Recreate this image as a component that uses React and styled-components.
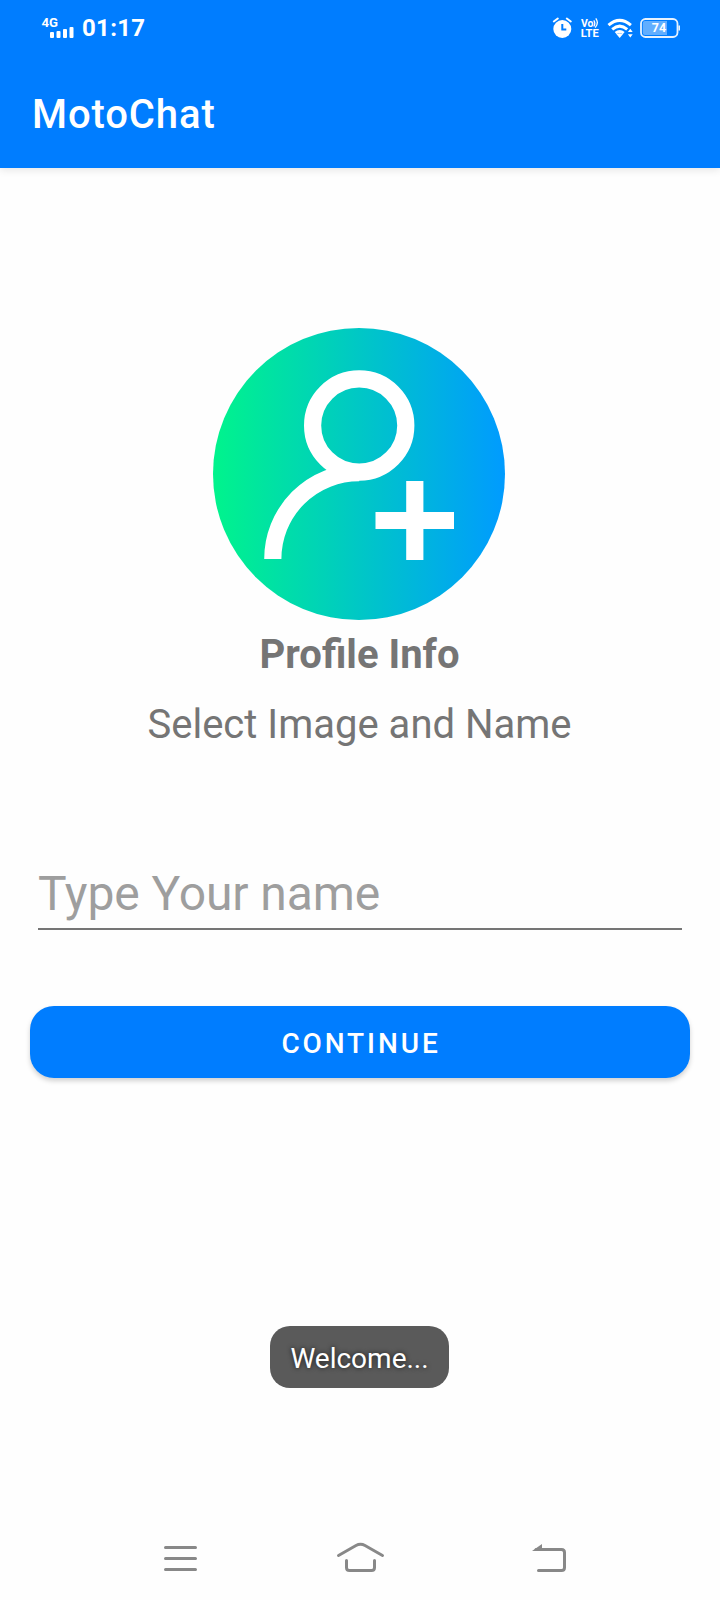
import React from "react";
import styled, { createGlobalStyle } from "styled-components";

const BLUE = "#007dff";
const GREY = "#757575";

const GlobalStyle = createGlobalStyle`
  * { box-sizing: border-box; }
  body {
    margin: 0;
    background: #fefefe;
    font-family: Roboto, "Liberation Sans", sans-serif;
  }
`;

const Screen = styled.div`
  position: relative;
  display: flex;
  flex-direction: column;
  width: 720px;
  height: 1600px;
  overflow: hidden;
  background: #fefefe;
`;

const Header = styled.header`
  height: 168px;
  background: ${BLUE};
  color: #fff;
  box-shadow: 0 2px 8px rgba(0, 0, 0, 0.1);
`;

const StatusBar = styled.div`
  display: flex;
  justify-content: space-between;
  height: 56px;
  padding: 13px 40px 0 41px;
`;

const StatusGroup = styled.div`
  display: flex;
  align-items: flex-start;
  gap: ${({ $gap }) => $gap}px;
`;

const Clock = styled.time`
  font-size: 24px;
  line-height: 30px;
  font-weight: 700;
  letter-spacing: 0.3px;
`;

const AppTitle = styled.h1`
  margin: 0;
  padding: 35px 0 0 32px;
  font-size: 40px;
  line-height: 48px;
  font-weight: 500;
  letter-spacing: 0.9px;
`;

const Main = styled.main`
  flex: 1;
  display: flex;
  flex-direction: column;
  align-items: center;
  padding: 160px 30px 0;
`;

const Avatar = styled.svg`
  display: block;
  margin-right: 2px;
`;

const Caption = styled.p`
  margin: ${({ $top }) => $top}px 1px 0 0;
  color: ${GREY};
  font-size: 40px;
  line-height: 48px;
  font-weight: ${({ $bold }) => ($bold ? 700 : 400)};
`;

const NameInput = styled.input`
  width: 644px;
  height: 76px;
  margin-top: 105px;
  padding: 5px 0 0;
  border: 0;
  border-bottom: 2px solid ${GREY};
  outline: 0;
  background: transparent;
  color: #222;
  font: 400 48px/56px Roboto, sans-serif;
  letter-spacing: -0.1px;
  &::placeholder {
    color: #9e9e9e;
    opacity: 1;
  }
`;

const ContinueButton = styled.button`
  width: 660px;
  height: 72px;
  margin-top: 76px;
  padding: 4px 0 0 2px;
  border: 0;
  border-radius: 24px;
  background: ${BLUE};
  box-shadow: 0 3px 5px rgba(0, 0, 0, 0.18);
  color: #fff;
  font: 500 28px/34px Roboto, sans-serif;
  letter-spacing: 2.9px;
`;

const Toast = styled.div`
  position: absolute;
  left: 270px;
  top: 1326px;
  width: 179px;
  height: 62px;
  padding-top: 2px;
  border-radius: 20px;
  background: #5a5a5a;
  color: #fff;
  font-size: 28px;
  line-height: 62px;
  text-align: center;
  text-shadow: 0 0 5px rgba(0, 0, 0, 0.75);
`;

const NavBar = styled.nav`
  display: flex;
  height: 84px;
  padding: 24px 0 0 160px;
`;

const NavIcon = styled.svg`
  display: block;
  margin-left: ${({ $shift = 0 }) => $shift}px;
  fill: none;
  stroke: #888;
  stroke-width: 3;
  stroke-linecap: round;
  stroke-linejoin: round;
`;

function SignalIcon() {
  return (
    <svg width="34" height="30" viewBox="41 13 34 30" fill="#fff">
      <text x="41.5" y="27" fontSize="13.3" fontWeight="700" textLength="16.5" lengthAdjust="spacingAndGlyphs">4G</text>
      <rect x="50" y="32" width="4" height="6" rx="1" />
      <rect x="56.5" y="31" width="4" height="7" rx="1" />
      <rect x="63" y="29" width="4" height="9" rx="1" />
      <rect x="69.5" y="27" width="4" height="11" rx="1" />
    </svg>
  );
}

function AlarmIcon() {
  return (
    <svg width="22" height="30" viewBox="551.7 13 22 30" fill="none">
      <circle cx="562" cy="29" r="9" fill="#fff" />
      <path d="M553.500 21.500l4-3M570.500 21.500l-4-3" stroke="#fff" strokeWidth="2" strokeLinecap="round" />
      <path d="M562 24v5.500h4" stroke={BLUE} strokeWidth="2" />
    </svg>
  );
}

function VolteIcon() {
  return (
    <svg width="20" height="30" viewBox="580 13 20 30" fill="#fff">
      <text x="581" y="26.8" fontSize="10.3" fontWeight="700" textLength="12.5" lengthAdjust="spacingAndGlyphs">Vo</text>
      <path d="M593.800 20.300q2 3.200 0 6.200M595.800 18.300q3.400 4.600-.6 9.400" fill="none" stroke="#fff" strokeWidth="1.300" />
      <text x="580.700" y="37" fontSize="10.800" fontWeight="700" textLength="18" lengthAdjust="spacingAndGlyphs">LTE</text>
    </svg>
  );
}

function WifiIcon() {
  return (
    <svg width="27" height="30" viewBox="606.5 13 27 30" fill="none">
      <g stroke="#fff" strokeWidth="3">
        <path d="M608 25.200q11.200-9.600 22.400 0" />
        <path d="M611.700 29.300q7.500-6.400 15 0" />
        <path d="M615.200 33.200q4-3.400 8 0" />
      </g>
      <path d="M616 34.300q3.200-2 6.400 0l-3.200 3.700z" fill="#fff" />
      <path d="M627.400 32l2.400-3.200 2.400 3.200zM627.400 34.200l2.400 3.200 2.400-3.200z" fill="#fff" />
    </svg>
  );
}

function BatteryIcon() {
  return (
    <svg width="40" height="30" viewBox="640 13 40 30">
      <rect x="641" y="19" width="36.500" height="18" rx="4.500" fill="none" stroke="#fff" strokeOpacity=".9" strokeWidth="1.800" />
      <path d="M645 21h22v14h-22q-2.200 0-2.200-2.200v-9.600q0-2.200 2.200-2.200z" fill="#fff" fillOpacity=".38" />
      <path d="M679.200 25.500v5" stroke="#fff" strokeWidth="1.400" />
      <text x="659" y="32.400" fontSize="12.500" fontWeight="700" textAnchor="middle" fill="#fff">74</text>
    </svg>
  );
}

function AddProfileImage() {
  return (
    <Avatar width="292" height="292" viewBox="213 328 292 292" fill="none">
      <defs>
        <linearGradient id="avatarFill" x1="0" x2="1" y1="0" y2="0">
          <stop offset="0" stopColor="#00f48c" />
          <stop offset="1" stopColor="#009bff" />
        </linearGradient>
      </defs>
      <circle cx="359" cy="474" r="146" fill="url(#avatarFill)" />
      <g stroke="#fff" strokeWidth="17.200">
        <circle cx="359.200" cy="425.500" r="46.600" />
        <path d="M272.800 559a86.400 86.400 0 0 1 86.400-86.400" />
        <path d="M375.500 520.500H454M414.800 481V560" />
      </g>
    </Avatar>
  );
}

export default function App() {
  return (
    <Screen>
      <GlobalStyle />
      <Header>
        <StatusBar>
          <StatusGroup $gap={7}>
            <SignalIcon />
            <Clock>01:17</Clock>
          </StatusGroup>
          <StatusGroup $gap={6.5}>
            <AlarmIcon />
            <VolteIcon />
            <WifiIcon />
            <BatteryIcon />
          </StatusGroup>
        </StatusBar>
        <AppTitle>MotoChat</AppTitle>
      </Header>
      <Main>
        <AddProfileImage />
        <Caption $top={11} $bold>Profile Info</Caption>
        <Caption $top={22}>Select Image and Name</Caption>
        <NameInput placeholder="Type Your name" aria-label="Your name" />
        <ContinueButton type="button">CONTINUE</ContinueButton>
      </Main>
      <Toast role="status">Welcome...</Toast>
      <NavBar>
        <NavIcon width="40" height="36" viewBox="160 1540 40 36">
          <path d="M165.500 1547.500h30M165.500 1558.500h30M165.500 1569.500h30" />
        </NavIcon>
        <NavIcon $shift={135} width="50" height="36" viewBox="335 1540 50 36">
          <path d="M338.500 1555.500l17.500-10q4.500-2.500 9 0l17.500 10" />
          <path d="M346.500 1560.500v7q0 3 3 3h22q3 0 3-3v-7" />
        </NavIcon>
        <NavIcon $shift={145} width="46" height="36" viewBox="530 1540 46 36">
          <path d="M536 1549.500h25.500q3 0 3 3v15q0 3-3 3h-23" />
          <path d="M532 1551l10-7v7z" fill="#888" stroke="none" />
        </NavIcon>
      </NavBar>
    </Screen>
  );
}
